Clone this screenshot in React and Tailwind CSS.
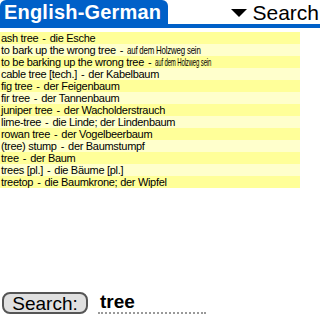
export default function App() {
  // [english, german, horizontal squeeze of german part]
  const rows = [
    ["ash tree", "die Esche"],
    ["to bark up the wrong tree", "auf dem Holzweg sein", "scale-x-[0.72]"],
    ["to be barking up the wrong tree", "auf dem Holzweg sein", "scale-x-[0.55]"],
    ["cable tree [tech.]", "der Kabelbaum"],
    ["fig tree", "der Feigenbaum"],
    ["fir tree", "der Tannenbaum"],
    ["juniper tree", "der Wacholderstrauch"],
    ["lime-tree", "die Linde; der Lindenbaum"],
    ["rowan tree", "der Vogelbeerbaum"],
    ["(tree) stump", "der Baumstumpf"],
    ["tree", "der Baum"],
    ["trees [pl.]", "die Bäume [pl.]"],
    ["treetop", "die Baumkrone; der Wipfel"],
  ];

  return (
    <div className="w-[320px] h-[320px] bg-white flex flex-col overflow-hidden font-['Liberation_Sans',sans-serif] text-black">
      {/* title bar */}
      <div className="flex items-end h-[28px] border-b-[4px] border-[#0060c8]">
        <div className="h-[24px] w-[168px] bg-[#0060c8] rounded-t-[6px] flex items-center pl-[4px]">
          <span className="text-white font-bold text-[20px] leading-none tracking-[0.2px]">English-German</span>
        </div>
        <div className="flex-1 h-[24px] flex items-center justify-end">
          <svg width="16" height="8" viewBox="0 0 16 8" className="mr-[5px] mt-[1px]">
            <polygon points="0,0 16,0 8,8" fill="#000" />
          </svg>
          <span className="text-[21px] leading-none mr-[1px]">Search</span>
        </div>
      </div>

      {/* list */}
      <div className="w-[300px] mt-[4px] flex flex-col">
        {rows.map(([en, de, squeeze], i) => (
          <div
            key={i}
            className={`h-[12px] flex items-center pl-[1px] text-[11px] leading-none tracking-[-0.3px] whitespace-nowrap overflow-hidden ${
              i % 2 === 0 ? "bg-[#ffff99]" : "bg-[#ffffcc]"
            }`}
          >
            <span>{en}</span>
            <span className="mx-[4px]">-</span>
            <span className={`inline-block origin-left ${squeeze || ""}`}>{de}</span>
          </div>
        ))}
      </div>

      <div className="flex-1" />

      {/* bottom bar */}
      <div className="flex items-center h-[22px] mb-[6px] pl-[2px]">
        <button className="w-[86px] h-[22px] bg-[#e0e0e0] border-2 border-[#555] rounded-[8px] text-[19px] leading-none flex items-center justify-center">
          Search:
        </button>
        <div className="ml-[10px] w-[108px] h-[22px] border-b-2 border-dotted border-[#999] flex items-end">
          <span className="text-[19px] leading-none font-bold pl-[2px] pb-[1px]">tree</span>
        </div>
      </div>
    </div>
  );
}
